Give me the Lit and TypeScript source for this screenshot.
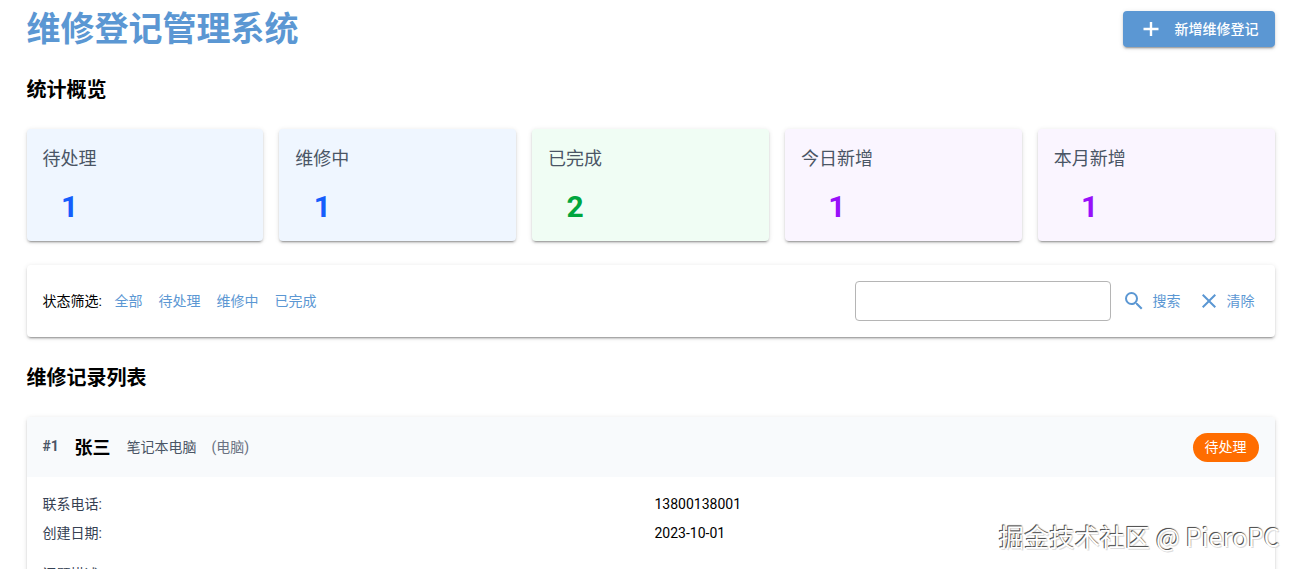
import { LitElement, html, css } from "lit";
import { customElement } from "lit/decorators.js";

const stats = [
  { label: "待处理", value: 1, tone: "blue" },
  { label: "维修中", value: 1, tone: "blue" },
  { label: "已完成", value: 2, tone: "green" },
  { label: "今日新增", value: 1, tone: "purple" },
  { label: "本月新增", value: 1, tone: "purple" },
];

@customElement("app-root")
export class AppRoot extends LitElement {
  static styles = css`
    :host {
      display: block;
      position: relative;
      height: 100vh;
      overflow: hidden;
      background: #fff;
      font-family: Roboto, "Noto Sans CJK SC", sans-serif;
      color: #000;
    }
    * { box-sizing: border-box; }
    .page { padding: 0 21.5px 0 26.5px; }
    .top {
      display: flex;
      justify-content: space-between;
      align-items: flex-start;
      height: 58px;
    }
    h1 {
      margin: 0;
      font-size: 34px;
      line-height: 58px;
      font-weight: 700;
      color: #5b97d3;
    }
    .add {
      margin-top: 11px;
      width: 152px;
      height: 36px;
      border-radius: 4px;
      background: #5b97d3;
      color: #fff;
      display: flex;
      align-items: center;
      gap: 16px;
      padding-left: 20px;
      font-size: 14px;
      font-weight: 500;
      box-shadow: 0 3px 1px -2px rgba(0,0,0,.2), 0 2px 2px 0 rgba(0,0,0,.14), 0 1px 5px 0 rgba(0,0,0,.12);
    }
    .add span { padding-bottom: 3px; }
    h2 {
      margin: 0;
      font-size: 20px;
      line-height: 32px;
      font-weight: 700;
    }
    .sec1 { margin-top: 16px; }
    .stats {
      display: grid;
      grid-template-columns: repeat(5, 1fr);
      gap: 16px;
      margin-top: 23px;
    }
    .card {
      border-radius: 4px;
      box-shadow: 0 3px 1px -2px rgba(0,0,0,.2), 0 2px 2px 0 rgba(0,0,0,.14), 0 1px 5px 0 rgba(0,0,0,.12);
    }
    .stat {
      height: 112px;
      padding: 16px;
    }
    .stat.blue { background: #eff6ff; }
    .stat.green { background: #f0fdf4; }
    .stat.purple { background: #faf5ff; }
    .inner { width: fit-content; }
    .stat .lab {
      font-size: 18px;
      line-height: 28px;
      color: #4a5565;
      white-space: nowrap;
    }
    .stat .val {
      margin-top: 14px;
      text-align: center;
      font-size: 30px;
      line-height: 40px;
      font-weight: 700;
    }
    .blue .val { color: #155dfc; }
    .green .val { color: #00a63e; }
    .purple .val { color: #9810fa; }
    .filter {
      margin-top: 24px;
      height: 72px;
      padding: 0 16px;
      display: flex;
      align-items: center;
      background: #fff;
      font-size: 14px;
    }
    .filter .name { margin-right: 13px; width: 59px; white-space: nowrap; padding-bottom: 3px; }
    .links { display: flex; gap: 16px; color: #5b97d3; font-size: 14px; padding-bottom: 3px; }
    .search { margin-left: auto; display: flex; align-items: center; }
    .input {
      width: 256px;
      height: 40px;
      border: 1px solid #b5b5b5;
      border-radius: 4px;
    }
    .tbtn {
      display: flex;
      align-items: center;
      color: #5b97d3;
      font-size: 14px;
    }
    .tbtn span { padding-bottom: 3px; }
    .tbtn svg { display: block; }
    .tbtn.s { margin-left: 11px; gap: 7px; }
    .tbtn.c { margin-left: 16px; margin-right: 4px; gap: 6px; }
    .sec2 { margin-top: 25px; }
    .record { margin-top: 23px; background: #fff; height: 400px; }
    .rhead {
      height: 60px;
      padding: 0 16px 2px;
      background: #f8fafc;
      display: flex;
      align-items: center;
      border-radius: 4px 4px 0 0;
    }
    .num { font-size: 14px; font-weight: 700; color: #4a5565; width: 32px; }
    .who { font-size: 18px; font-weight: 700; margin-right: 16px; }
    .dev { font-size: 14px; color: #4a5565; margin-right: 15px; }
    .type { font-size: 14px; color: #6a7282; }
    .chip {
      margin-left: auto;
      margin-top: 2px;
      height: 29px;
      width: 66px;
      border-radius: 15px;
      background: #ff6d00;
      color: #fff;
      font-size: 14px;
      display: flex;
      align-items: center;
      justify-content: center;
      padding-bottom: 2px;
    }
    .rbody { padding: 13px 16px 0; font-size: 14px; }
    .row {
      display: grid;
      grid-template-columns: 612px 1fr;
      line-height: 29px;
    }
    .row .k { color: #364153; }
    .desc { margin-top: 12px; line-height: 29px; color: #364153; }
    .mark {
      position: absolute;
      right: 16px;
      bottom: 18px;
      font-family: "Noto Sans CJK SC", sans-serif;
      font-size: 25px;
      line-height: 30px;
      color: #fff;
      letter-spacing: 0.2px;
      text-shadow: -1px -1px 0 #555, 0 -1px 1px #777, 1px 1px 0 #ddd;
      white-space: nowrap;
    }
  `;

  render() {
    return html`
      <div class="page">
        <div class="top">
          <h1>维修登记管理系统</h1>
          <div class="add">
            <svg width="16" height="16" viewBox="0 0 16 16"><path d="M8 1v14M.5 8h15" stroke="#fff" stroke-width="2.4" fill="none"/></svg>
            <span>新增维修登记</span>
          </div>
        </div>
        <h2 class="sec1">统计概览</h2>
        <div class="stats">
          ${stats.map(
            (s) => html`<div class="card stat ${s.tone}">
              <div class="inner">
                <div class="lab">${s.label}</div>
                <div class="val">${s.value}</div>
              </div>
            </div>`
          )}
        </div>
        <div class="card filter">
          <span class="name">状态筛选:</span>
          <div class="links">
            <span>全部</span><span>待处理</span><span>维修中</span><span>已完成</span>
          </div>
          <div class="search">
            <div class="input"></div>
            <div class="tbtn s">
              <svg width="24" height="24" viewBox="0 0 24 24"><path fill="#5b97d3" d="M15.5 14h-.79l-.28-.27A6.47 6.47 0 0 0 16 9.5 6.5 6.5 0 1 0 9.5 16c1.61 0 3.09-.59 4.23-1.57l.27.28v.79l5 4.99L20.49 19l-4.99-5zm-6 0C7.01 14 5 11.99 5 9.5S7.01 5 9.5 5 14 7.01 14 9.5 11.99 14 9.5 14z"/></svg>
              <span>搜索</span>
            </div>
            <div class="tbtn c">
              <svg width="24" height="24" viewBox="0 0 24 24"><path fill="#5b97d3" d="M19 6.41 17.59 5 12 10.59 6.41 5 5 6.41 10.59 12 5 17.59 6.41 19 12 13.41 17.59 19 19 17.59 13.41 12z"/></svg>
              <span>清除</span>
            </div>
          </div>
        </div>
        <h2 class="sec2">维修记录列表</h2>
        <div class="card record">
          <div class="rhead">
            <span class="num">#1</span>
            <span class="who">张三</span>
            <span class="dev">笔记本电脑</span>
            <span class="type">(电脑)</span>
            <span class="chip">待处理</span>
          </div>
          <div class="rbody">
            <div class="row"><span class="k">联系电话:</span><span>13800138001</span></div>
            <div class="row"><span class="k">创建日期:</span><span>2023-10-01</span></div>
            <div class="desc">问题描述:</div>
          </div>
        </div>
      </div>
      <div class="mark">掘金技术社区 @ PieroPC</div>
    `;
  }
}
